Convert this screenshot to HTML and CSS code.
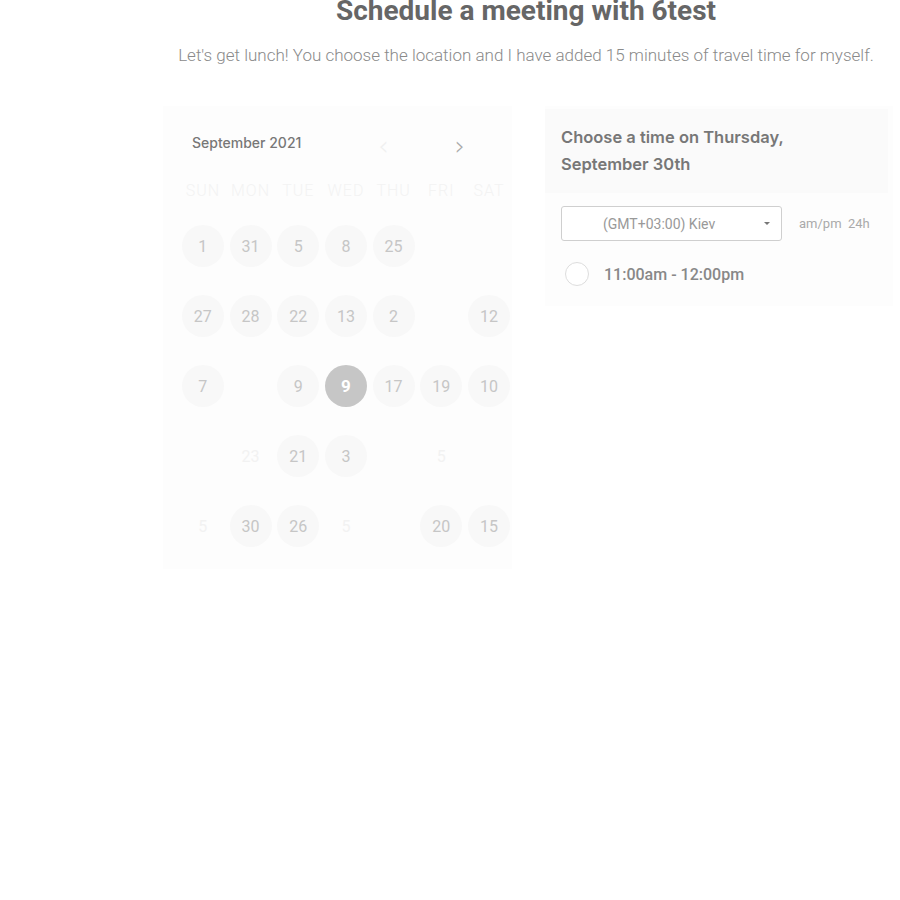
FILE: index.html
```html
<!DOCTYPE html>
<html>
<head>
<meta charset="utf-8">
<link rel="stylesheet" href="styles.css">
</head>
<body>
<div class="page">
  <h1 class="title">Schedule a meeting with 6test</h1>
  <p class="subtitle">Let's get lunch! You choose the location and I have added 15 minutes of travel time for myself.</p>
  <div class="columns">
    <div class="calendar">
      <div class="cal-head">
        <span class="month">September 2021</span>
        <span class="nav prev">&#8249;</span>
        <span class="nav next">&#8250;</span>
      </div>
      <div class="weekdays">
        <span>SUN</span><span>MON</span><span>TUE</span><span>WED</span><span>THU</span><span>FRI</span><span>SAT</span>
      </div>
      <div class="grid">
        <span class="day">1</span><span class="day">31</span><span class="day">5</span><span class="day">8</span><span class="day">25</span><span class="empty"></span><span class="empty"></span>
        <span class="day">27</span><span class="day">28</span><span class="day">22</span><span class="day">13</span><span class="day">2</span><span class="empty"></span><span class="day">12</span>
        <span class="day">7</span><span class="empty"></span><span class="day">9</span><span class="day selected">9</span><span class="day">17</span><span class="day">19</span><span class="day">10</span>
        <span class="empty"></span><span class="faint">23</span><span class="day">21</span><span class="day">3</span><span class="empty"></span><span class="faint">5</span><span class="empty"></span>
        <span class="faint">5</span><span class="day">30</span><span class="day">26</span><span class="faint">5</span><span class="empty"></span><span class="day">20</span><span class="day">15</span>
      </div>
    </div>
    <div class="times">
      <div class="times-head">Choose a time on Thursday, September 30th</div>
      <div class="tz-row">
        <div class="select">
          <span class="select-text">(GMT+03:00) Kiev</span>
          <span class="caret"></span>
        </div>
        <span class="fmt">am/pm&nbsp; 24h</span>
      </div>
      <div class="slot">
        <span class="radio"></span>
        <span class="slot-text">11:00am - 12:00pm</span>
      </div>
    </div>
  </div>
</div>
</body>
</html>
```

FILE: styles.css
```css
* { box-sizing: border-box; }
html, body { margin: 0; padding: 0; background: #fff; }
body { font-family: Roboto, "Liberation Sans", sans-serif; }

.page {
  width: 730px;
  margin-left: 163px;
}

.title {
  margin: -4px 0 0;
  font-size: 28px;
  font-weight: 700;
  color: #666;
  text-align: center;
  line-height: 30px;
  margin-left: -4px;
  margin-right: 0;
}

.subtitle {
  margin: 18px 0 0;
  font-size: 17px;
  font-weight: 300;
  color: #8a8a8a;
  text-align: center;
  line-height: 22px;
  white-space: nowrap;
  margin-left: -4px;
}

.columns {
  display: flex;
  gap: 33px;
  margin-top: 40px;
  align-items: flex-start;
}

.calendar {
  width: 349px;
  height: 463px;
  background: #fdfdfd;
  padding: 0 0 0 16px;
}

.cal-head {
  display: flex;
  align-items: center;
  height: 72px;
  font-family: Inter, "Noto Sans", sans-serif;
}

.month {
  margin-left: 13px;
  font-size: 14px;
  font-weight: 500;
  color: #777;
}

.nav {
  font-size: 26px;
  line-height: 1;
  margin-top: 8px;
  font-family: "DejaVu Sans", sans-serif;
  font-weight: 300;
}
.prev { color: #f0f0f0; margin-left: 77px; }
.next { color: #aaa; margin-left: 66px; }

.weekdays {
  display: grid;
  grid-template-columns: repeat(7, 47.7px);
  height: 20px;
  margin-top: 3px;
  font-size: 16px;
  font-weight: 300;
  color: #f3f3f3;
  letter-spacing: 1px;
  text-align: center;
  line-height: 20px;
}

.grid {
  display: grid;
  grid-template-columns: repeat(7, 47.7px);
  grid-auto-rows: 70px;
  margin-top: 10px;
}

.grid > span {
  display: flex;
  align-items: center;
  justify-content: center;
  font-size: 16px;
  color: #c6c6c6;
}

.day {
  width: 42px;
  height: 42px;
  border-radius: 50%;
  background: #f8f8f8;
  justify-self: center;
  align-self: center;
}
.day.selected {
  background: #c6c6c6;
  color: #fff !important;
  font-weight: 700;
  font-size: 17px;
}
.faint {
  color: #f2f2f2 !important;
}

.times {
  width: 348px;
  height: 200px;
  background: #fdfdfd;
}

.times-head {
  height: 84px;
  margin-top: 3px;
  width: 343px;
  background: #fafafa;
  padding: 15px 60px 0 16px;
  font-family: Inter, "Noto Sans", sans-serif;
  font-size: 16.5px;
  font-weight: 600;
  line-height: 27px;
  color: #777;
}

.tz-row {
  display: flex;
  align-items: center;
  margin-top: 13px;
  padding-left: 16px;
}

.select {
  width: 221px;
  height: 35px;
  border: 1px solid #cfcfcf;
  border-radius: 3px;
  display: flex;
  align-items: center;
  position: relative;
  background: #fff;
}
.select-text {
  margin-left: 41px;
  font-size: 14px;
  color: #999;
}
.caret {
  position: absolute;
  right: 11px;
  top: 15px;
  width: 0;
  height: 0;
  border-left: 3px solid transparent;
  border-right: 3px solid transparent;
  border-top: 3px solid #777;
}

.fmt {
  margin-left: 17px;
  font-size: 13px;
  color: #aaa;
  white-space: nowrap;
}

.slot {
  display: flex;
  align-items: center;
  margin-top: 21px;
  padding-left: 20px;
}
.radio {
  width: 24px;
  height: 24px;
  border-radius: 50%;
  border: 1px solid #ddd;
  background: #fff;
}
.slot-text {
  margin-left: 15px;
  font-size: 16px;
  font-weight: 500;
  color: #888;
}
```
